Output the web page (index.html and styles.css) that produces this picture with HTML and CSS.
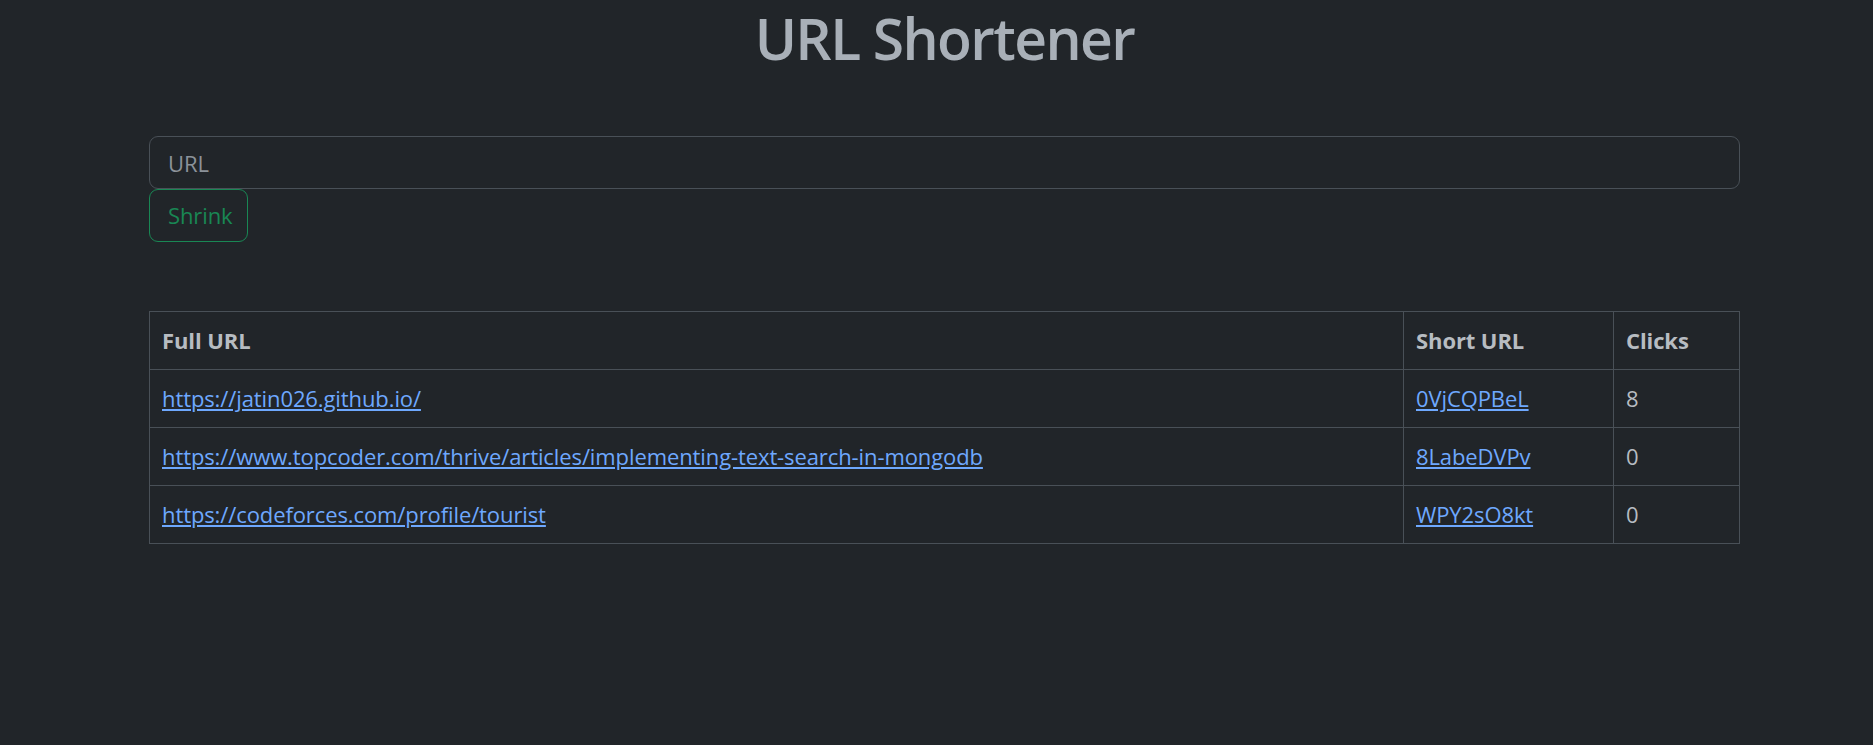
FILE: index.html
```html
<!DOCTYPE html>
<html lang="en">
<head>
<meta charset="utf-8">
<title>URL Shortener</title>
<link rel="stylesheet" href="styles.css">
</head>
<body>
<div class="container">
  <h1 class="title">URL Shortener</h1>
  <form class="shrink-form">
    <input class="url-input" type="url" name="fullUrl" placeholder="URL">
    <button class="btn-shrink" type="submit">Shrink</button>
  </form>
  <table class="url-table">
    <thead>
      <tr>
        <th class="col-full">Full URL</th>
        <th class="col-short">Short URL</th>
        <th class="col-clicks">Clicks</th>
      </tr>
    </thead>
    <tbody>
      <tr>
        <td><a href="#">https://jatin026.github.io/</a></td>
        <td><a href="#">0VjCQPBeL</a></td>
        <td>8</td>
      </tr>
      <tr>
        <td><a href="#">https://www.topcoder.com/thrive/articles/implementing-text-search-in-mongodb</a></td>
        <td><a href="#">8LabeDVPv</a></td>
        <td>0</td>
      </tr>
      <tr>
        <td><a href="#">https://codeforces.com/profile/tourist</a></td>
        <td><a href="#">WPY2sO8kt</a></td>
        <td>0</td>
      </tr>
    </tbody>
  </table>
</div>
</body>
</html>
```
FILE: styles.css
```css
* { box-sizing: border-box; }
html, body {
  margin: 0;
  background: #212529;
  color: #dee2e6;
  font-family: "Open Sans", "Noto Sans", sans-serif;
  font-size: 22px;
  line-height: 1.5;
  letter-spacing: -0.1px;
}
.container {
  width: 1591px;
  margin-left: 149px;
}
.title {
  margin: 0;
  padding-top: 4px;
  font-size: 57px;
  font-weight: 600;
  line-height: 68px;
  text-align: center;
  color: #a9b0b8;
  letter-spacing: -1.6px;
}
.shrink-form {
  margin-top: 64px;
  display: flex;
  flex-direction: column;
  align-items: flex-start;
}
.url-input {
  width: 100%;
  height: 53px;
  padding: 8px 18px;
  font: inherit;
  letter-spacing: -0.1px;
  color: #dee2e6;
  background: #212529;
  border: 1px solid #495057;
  border-radius: 9px;
  outline: none;
}
.url-input::placeholder { color: #8b9299; }
.btn-shrink {
  height: 53px;
  width: 99px;
  padding: 8px 18px;
  font: inherit;
  letter-spacing: -0.1px;
  color: #198754;
  background: transparent;
  border: 1px solid #198754;
  border-radius: 9px;
}
.url-table {
  margin-top: 69px;
  width: 100%;
  border-collapse: collapse;
}
.url-table th, .url-table td {
  border: 1px solid #495057;
  padding: 12px 12px;
  text-align: left;
  height: 58px;
}
.url-table th { font-weight: 700; color: #b7bcc1; }
.url-table td { color: #b7bcc1; }
.col-full { width: 1254px; }
.col-short { width: 210px; }
.url-table a { color: #6ea8fe; text-decoration: underline; }
```
